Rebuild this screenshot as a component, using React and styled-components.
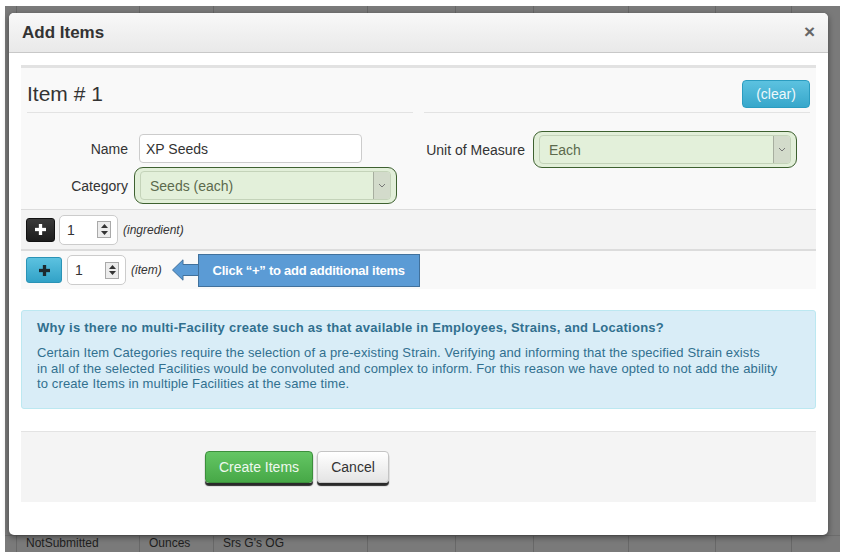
import React from 'react'
import styled, { createGlobalStyle } from 'styled-components'

const GlobalStyle = createGlobalStyle`
  html, body {
    margin: 0;
    padding: 0;
    background: #fff;
    font-family: "Liberation Sans", Arial, sans-serif;
  }
  * { box-sizing: border-box; }
`;

const Screen = styled.div`
  width: 846px;
  height: 552px;
  padding: 6px 6px 0 5px;
  overflow: hidden;
`;

const Backdrop = styled.div`
  position: relative;
  height: 100%;
  background: #7a7a7a;
  display: grid;
  grid-template-columns: 11px 123px 74px 154px 88px 78px 95px 87px 76px 1fr;
  grid-template-rows: 1fr 17px;
`;

const BackCell = styled.div`
  border-left: ${p => (p.$first ? 'none' : '1px solid #686868')};
  border-top: ${p => (p.$bottom ? '1px solid #6c6c6c' : 'none')};
  font-size: 12px;
  line-height: 14px;
  color: #1e1e1e;
  padding: 0 0 0 9px;
  white-space: nowrap;
  overflow: hidden;
`;

const Modal = styled.div`
  position: absolute;
  left: 4px;
  top: 7px;
  width: 819px;
  height: 522px;
  background: #fff;
  border-radius: 5px;
  box-shadow: 0 2px 6px rgba(0, 0, 0, 0.45);
  overflow: hidden;
  display: flex;
  flex-direction: column;
`;

const Header = styled.div`
  height: 40px;
  display: flex;
  align-items: center;
  justify-content: space-between;
  padding: 0 13px 0 13px;
  background: linear-gradient(#f8f8f8, #e9e9e9);
  border-bottom: 1px solid #c8c8c8;
`;

const Title = styled.h4`
  margin: 0;
  font-size: 17px;
  font-weight: bold;
  color: #333;
`;

const Close = styled.span`
  font-size: 19px;
  font-weight: bold;
  color: #666;
  line-height: 1;
  margin-top: -3px;
`;

const Body = styled.div`
  padding: 12px 12px 0 12px;
  display: flex;
  flex-direction: column;
`;

const ItemPanel = styled.div`
  border-top: 3px solid #e2e2e2;
  background: #f9f9f9;
`;

const ItemSection = styled.div`
  display: grid;
  grid-template-columns: 386px 386px;
  column-gap: 11px;
  padding: 0 5px 5px 6px;
`;

const HeadCell = styled.div`
  height: 45px;
  padding-top: 7px;
  border-bottom: 1px solid #e3e3e3;
  display: flex;
  align-items: center;
  justify-content: ${p => (p.$right ? 'flex-end' : 'flex-start')};
`;

const ItemTitle = styled.div`
  font-size: 21px;
  color: #333;
`;

const ClearButton = styled.button`
  width: 68px;
  height: 28px;
  margin-top: 1px;
  border: 1px solid #2b9cc0;
  border-radius: 4px;
  background: linear-gradient(#5cc2e0, #37a7cb);
  color: #eef8fb;
  font-family: inherit;
  font-size: 14px;
  padding: 0;
`;

const FieldCol = styled.div`
  display: flex;
  flex-direction: column;
  gap: ${p => p.$gap || 0}px;
  padding-top: ${p => p.$top || 0}px;
`;

const FieldRow = styled.div`
  display: flex;
  align-items: center;
`;

const Label = styled.label`
  width: 101px;
  text-align: right;
  font-size: 14px;
  color: #333;
  margin-right: ${p => p.$space}px;
`;

const TextInput = styled.div`
  width: 223px;
  height: 29px;
  border: 1px solid #ccc;
  border-radius: 4px;
  background: #fff;
  font-size: 14px;
  color: #333;
  display: flex;
  align-items: center;
  padding-left: 6px;
`;

const Highlight = styled.div`
  border: 1.5px solid #3e6130;
  border-radius: 9px;
  background: #e2efd9;
  padding: 3px 5px 3px 5px;
  width: ${p => p.$w}px;
`;

const Select = styled.div`
  height: 29px;
  border: 1px solid #c4d3b9;
  border-radius: 4px;
  background: #e3f0da;
  display: flex;
  align-items: center;
  justify-content: space-between;
  font-size: 14px;
  color: #5c6a4d;
  padding: 0 0 0 9px;
`;

const SelectArrow = styled.div`
  width: 17px;
  height: 27px;
  border-left: 1px solid #a7ae9f;
  background: #d3dbcb;
  display: flex;
  align-items: center;
  justify-content: center;
  border-radius: 0 3px 3px 0;
`;

const QtyRow = styled.div`
  display: flex;
  align-items: center;
  height: ${p => p.$h}px;
  padding-left: 5px;
  background: ${p => p.$bg};
  border-top: ${p => p.$top || 'none'};
  border-bottom: ${p => p.$bottom || 'none'};
`;

const PlusButton = styled.div`
  width: ${p => p.$w}px;
  height: ${p => p.$h}px;
  border-radius: 3px;
  display: flex;
  align-items: center;
  justify-content: center;
  background: ${p => (p.$info ? 'linear-gradient(#5cc2e0, #32a2c7)' : 'linear-gradient(#3a3a3a, #1c1c1c)')};
  border: 1px solid ${p => (p.$info ? '#2a93b6' : '#111')};
  margin-right: ${p => p.$gap}px;
`;

const NumberBox = styled.div`
  width: 59px;
  height: 30px;
  border: 1px solid #ccc;
  border-radius: 5px;
  background: #fff;
  display: flex;
  align-items: center;
  justify-content: space-between;
  padding: 0 6px 0 7px;
  font-size: 14px;
  color: #333;
`;

const Spinner = styled.div`
  width: 14px;
  height: 17px;
  border: 1px solid #a9a9a9;
  background: #ececec;
  display: flex;
  flex-direction: column;
  align-items: center;
  justify-content: space-around;
  padding: 1px 0;
`;

const Hint = styled.span`
  font-size: 12px;
  font-style: italic;
  color: #333;
  margin-left: 5px;
`;

const Callout = styled.div`
  display: flex;
  align-items: center;
  margin-left: 10px;
`;

const CalloutBox = styled.div`
  width: 222px;
  height: 33px;
  margin-left: -1px;
  background: #5b9bd5;
  border: 1px solid #41719c;
  color: #fff;
  font-weight: bold;
  font-size: 13px;
  letter-spacing: -0.25px;
  display: flex;
  align-items: center;
  justify-content: center;
  padding-top: 1px;
`;

const Alert = styled.div`
  margin-top: 21px;
  height: 99px;
  border: 1px solid #bce8f1;
  border-radius: 3px;
  background: #d9edf7;
  color: #31708f;
  padding: 9px 15px 0 15px;
`;

const AlertTitle = styled.div`
  font-size: 13px;
  font-weight: bold;
  line-height: 16px;
  letter-spacing: 0.25px;
  margin-bottom: 9px;
`;

const AlertText = styled.p`
  margin: 0;
  font-size: 13px;
  line-height: 15.5px;
  letter-spacing: 0.12px;
`;

const Footer = styled.div`
  margin-top: 22px;
  height: 71px;
  border-top: 1px solid #e3e3e3;
  background: #f4f4f4;
  display: flex;
  align-items: flex-start;
  gap: 4px;
  padding: 19px 0 0 184px;
`;

const ActionButton = styled.button`
  height: 32px;
  width: ${p => p.$w}px;
  border-radius: 4px;
  font-family: inherit;
  font-size: 14px;
  padding: 0;
  border: 1px solid ${p => (p.$primary ? '#3c8f3c' : '#c4c4c4')};
  background: ${p => (p.$primary ? 'linear-gradient(#64c664, #47a847)' : 'linear-gradient(#ffffff, #e4e4e4)')};
  color: ${p => (p.$primary ? '#eef8ee' : '#333')};
  box-shadow: 0 3px 1px #2a2a2a;
`;

const PlusIcon = ({ color, size }) => (
  <svg width={size} height={size} viewBox="0 0 12 12">
    <rect x="4.2" y="0" width="3.6" height="12" fill={color} />
    <rect x="0" y="4.2" width="12" height="3.6" fill={color} />
  </svg>
);

const SpinArrows = () => (
  <>
    <svg width="7" height="4" viewBox="0 0 7 4"><path d="M0 4 L3.5 0 L7 4 Z" fill="#333" /></svg>
    <svg width="7" height="4" viewBox="0 0 7 4"><path d="M0 0 L3.5 4 L7 0 Z" fill="#333" /></svg>
  </>
);

const Chevron = () => (
  <svg width="8" height="5" viewBox="0 0 8 5">
    <path d="M1 1 L4 4 L7 1" fill="none" stroke="#777" strokeWidth="1" />
  </svg>
);

const LeftArrow = () => (
  <svg width="27" height="22" viewBox="0 0 27 22">
    <path d="M0.5 11 L11 0.8 L11 5.5 L27 5.5 L27 16.5 L11 16.5 L11 21.2 Z" fill="#5b9bd5" stroke="#41719c" strokeWidth="1" />
  </svg>
);

const widths = [11, 123, 74, 154, 88, 78, 95, 87, 76, 49];
const bottomRow = ['', 'NotSubmitted', 'Ounces', "Srs G's OG", '', '', '', '', '', ''];

export default function App() {
  return (
    <Screen>
      <GlobalStyle />
      <Backdrop>
        {widths.map((w, i) => <BackCell key={'t' + i} $first={i === 0} />)}
        {bottomRow.map((t, i) => <BackCell key={'b' + i} $first={i === 0} $bottom>{t}</BackCell>)}

        <Modal>
          <Header>
            <Title>Add Items</Title>
            <Close>×</Close>
          </Header>
          <Body>
            <ItemPanel>
              <ItemSection>
                <HeadCell>
                  <ItemTitle>Item # 1</ItemTitle>
                </HeadCell>
                <HeadCell $right>
                  <ClearButton>(clear)</ClearButton>
                </HeadCell>

                <FieldCol $top={21} $gap={4}>
                  <FieldRow>
                    <Label $space={11}>Name</Label>
                    <TextInput>XP Seeds</TextInput>
                  </FieldRow>
                  <FieldRow>
                    <Label $space={6}>Category</Label>
                    <Highlight $w={263}>
                      <Select>
                        Seeds (each)
                        <SelectArrow><Chevron /></SelectArrow>
                      </Select>
                    </Highlight>
                  </FieldRow>
                </FieldCol>
                <FieldCol $top={18}>
                  <FieldRow>
                    <Label $space={8}>Unit of Measure</Label>
                    <Highlight $w={264}>
                      <Select>
                        Each
                        <SelectArrow><Chevron /></SelectArrow>
                      </Select>
                    </Highlight>
                  </FieldRow>
                </FieldCol>
              </ItemSection>

              <QtyRow $h={42} $bg="#f3f3f3" $top="1px solid #dcdcdc" $bottom="2px solid #dcdcdc">
                <PlusButton $w={29} $h={24} $gap={4}><PlusIcon color="#fff" size={11} /></PlusButton>
                <NumberBox>1<Spinner><SpinArrows /></Spinner></NumberBox>
                <Hint>(ingredient)</Hint>
              </QtyRow>
              <QtyRow $h={38} $bg="#f9f9f9">
                <PlusButton $info $w={36} $h={26} $gap={5}><PlusIcon color="#1d2a30" size={11} /></PlusButton>
                <NumberBox>1<Spinner><SpinArrows /></Spinner></NumberBox>
                <Hint>(item)</Hint>
                <Callout>
                  <LeftArrow />
                  <CalloutBox>Click “+” to add additional items</CalloutBox>
                </Callout>
              </QtyRow>
            </ItemPanel>

            <Alert>
              <AlertTitle>Why is there no multi-Facility create such as that available in Employees, Strains, and Locations?</AlertTitle>
              <AlertText>
                Certain Item Categories require the selection of a pre-existing Strain. Verifying and informing that the specified Strain exists<br />
                in all of the selected Facilities would be convoluted and complex to inform. For this reason we have opted to not add the ability<br />
                to create Items in multiple Facilities at the same time.
              </AlertText>
            </Alert>

            <Footer>
              <ActionButton $primary $w={108}>Create Items</ActionButton>
              <ActionButton $w={72}>Cancel</ActionButton>
            </Footer>
          </Body>
        </Modal>
      </Backdrop>
    </Screen>
  )
}
